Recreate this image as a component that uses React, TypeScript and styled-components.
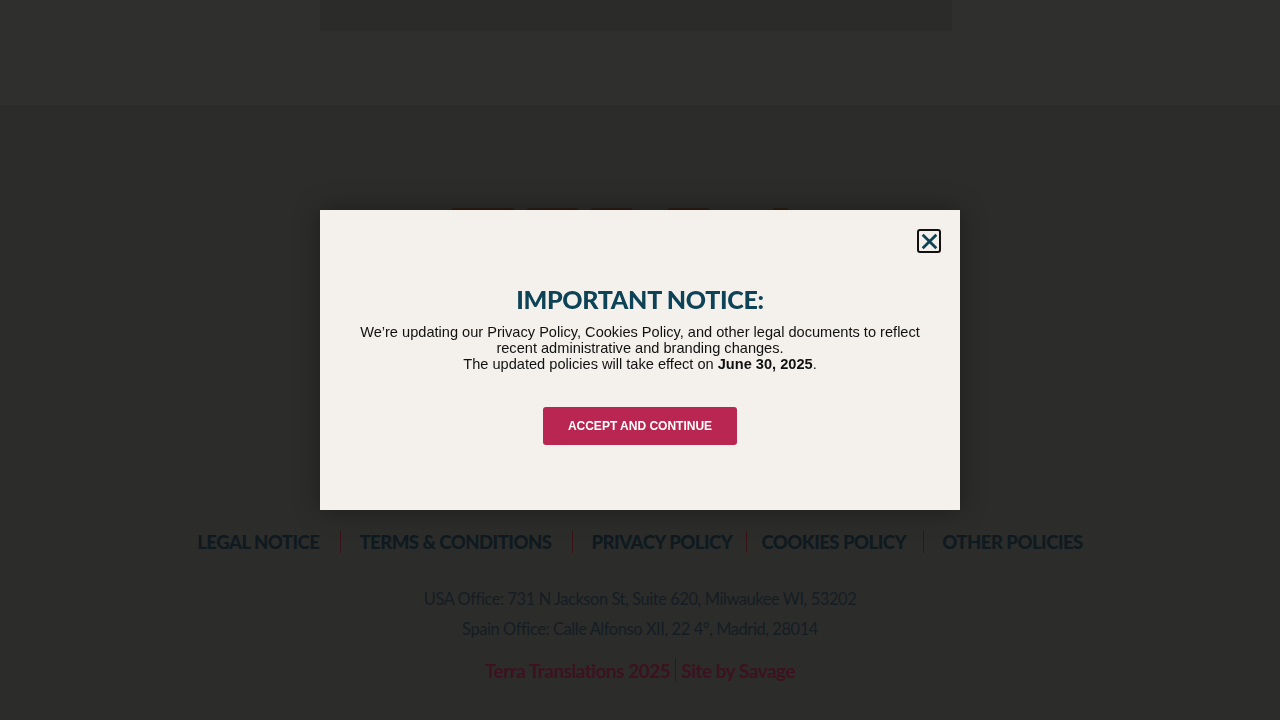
import React from 'react';
import styled, { createGlobalStyle } from 'styled-components';

const GlobalStyle = createGlobalStyle`
  html, body {
    margin: 0;
    padding: 0;
    background: #2c2c2a;
  }
  #root {
    min-height: 720px;
  }
`;

const Page = styled.div`
  width: 1280px;
  height: 720px;
  overflow: hidden;
  display: flex;
  flex-direction: column;
  background: #2c2c2a;
  font-family: "Lato", "Open Sans", sans-serif;
`;

const Header = styled.header`
  height: 105px;
  background: #2f2f2e;
  display: flex;
  justify-content: center;
`;

const HeaderBar = styled.div`
  width: 632px;
  height: 31px;
  margin-left: -8px;
  background: #2b2b2a;
`;

const LogoRow = styled.div`
  margin-top: 103px;
  height: 60px;
  display: flex;
  justify-content: center;
  align-items: flex-start;
  gap: 11px;
  padding-right: 40px;
`;

const Logo = styled.div<{ $w: number; $ml?: number }>`
  width: ${p => p.$w}px;
  height: 40px;
  margin-left: ${p => p.$ml ?? 0}px;
  background: #2a1c14;
  border-radius: 4px 4px 0 0;
`;

const Footer = styled.footer`
  margin-top: 262px;
  display: flex;
  flex-direction: column;
  align-items: center;
`;

const LinkRow = styled.nav`
  display: flex;
  align-items: center;
  height: 24px;
`;

const FooterLink = styled.a<{ $pl: number; $pr: number; $sep?: boolean }>`
  font-family: "Lato", sans-serif;
  font-weight: 900;
  font-size: 18.5px;
  letter-spacing: -0.5px;
  color: #0f1a20;
  text-decoration: none;
  padding: 0 ${p => p.$pr}px 0 ${p => p.$pl}px;
  line-height: 22px;
  border-right: ${p => (p.$sep ? '1px solid #3a1119' : 'none')};
`;

const Address = styled.p`
  margin: 0;
  font-family: "Lato", sans-serif;
  font-weight: 400;
  font-size: 16.4px;
  letter-spacing: -0.4px;
  color: #151d24;
  line-height: 30px;
`;

const Addresses = styled.div`
  margin-top: 30px;
  text-align: center;
`;

const Credit = styled.p`
  margin: 14px 0 0;
  font-family: "Lato", sans-serif;
  font-weight: 700;
  font-size: 19px;
  letter-spacing: -0.5px;
  color: #3c1220;
  display: flex;
  align-items: center;
  gap: 5px;
`;

const CreditSep = styled.span`
  display: inline-block;
  width: 1px;
  height: 24px;
  background: #3c1220;
`;

const Backdrop = styled.div`
  position: fixed;
  inset: 0;
  display: flex;
  align-items: center;
  justify-content: center;
`;

const Modal = styled.div`
  position: relative;
  width: 640px;
  height: 300px;
  box-sizing: border-box;
  background: #f4f1ec;
  box-shadow: 0 0 24px rgba(0, 0, 0, 0.35);
  display: flex;
  flex-direction: column;
  align-items: center;
  padding-top: 72px;
`;

const CloseButton = styled.button`
  position: absolute;
  top: 19px;
  right: 19px;
  width: 24px;
  height: 24px;
  padding: 0;
  box-sizing: border-box;
  border: 2px solid #111;
  border-radius: 3px;
  background: transparent;
  display: flex;
  align-items: center;
  justify-content: center;
  cursor: pointer;

  svg {
    width: 17px;
    height: 17px;
  }
`;

const Title = styled.h2`
  margin: 0;
  font-family: "Lato", sans-serif;
  font-weight: 900;
  font-size: 25px;
  letter-spacing: -0.3px;
  line-height: 34px;
  color: #0e4256;
`;

const Body = styled.p`
  margin: 8px 0 0;
  font-family: "Liberation Sans", Arial, sans-serif;
  font-size: 14.6px;
  line-height: 16px;
  color: #111;
  text-align: center;

  strong {
    font-weight: 700;
  }
`;

const AcceptButton = styled.button`
  margin-top: 35px;
  width: 194px;
  height: 38px;
  border: none;
  border-radius: 3px;
  background: #b92651;
  color: #fff;
  font-family: "Liberation Sans", Arial, sans-serif;
  font-weight: 700;
  font-size: 12px;
  cursor: pointer;
`;

const links = [
  { label: 'LEGAL NOTICE', pl: 0, pr: 21 },
  { label: 'TERMS & CONDITIONS', pl: 18, pr: 21 },
  { label: 'PRIVACY POLICY', pl: 18, pr: 14 },
  { label: 'COOKIES POLICY', pl: 14, pr: 17 },
  { label: 'OTHER POLICIES', pl: 18, pr: 0 },
];

export default function App() {
  return (
    <>
      <GlobalStyle />
      <Page>
        <Header>
          <HeaderBar />
        </Header>
        <LogoRow>
          <Logo $w={64} />
          <Logo $w={53} />
          <Logo $w={43} />
          <Logo $w={43} $ml={23} />
          <Logo $w={17} $ml={51} />
        </LogoRow>
        <Footer>
          <LinkRow>
            {links.map((l, i) => (
              <FooterLink key={l.label} href="#" $pl={l.pl} $pr={l.pr} $sep={i < links.length - 1}>
                {l.label}
              </FooterLink>
            ))}
          </LinkRow>
          <Addresses>
            <Address>USA Office: 731 N Jackson St, Suite 620, Milwaukee WI, 53202</Address>
            <Address>Spain Office: Calle Alfonso XII, 22 4°, Madrid, 28014</Address>
          </Addresses>
          <Credit>
            Terra Translations 2025 <CreditSep /> Site by Savage
          </Credit>
        </Footer>
      </Page>
      <Backdrop>
        <Modal>
          <CloseButton aria-label="Close">
            <svg viewBox="0 0 16 16" fill="none" stroke="#0e4256" strokeWidth="2.6" strokeLinecap="square">
              <path d="M2.5 2.5 L13.5 13.5 M13.5 2.5 L2.5 13.5" />
            </svg>
          </CloseButton>
          <Title>IMPORTANT NOTICE:</Title>
          <Body>
            We’re updating our Privacy Policy, Cookies Policy, and other legal documents to reflect
            <br />
            recent administrative and branding changes.
            <br />
            The updated policies will take effect on <strong>June 30, 2025</strong>.
          </Body>
          <AcceptButton>ACCEPT AND CONTINUE</AcceptButton>
        </Modal>
      </Backdrop>
    </>
  );
}
